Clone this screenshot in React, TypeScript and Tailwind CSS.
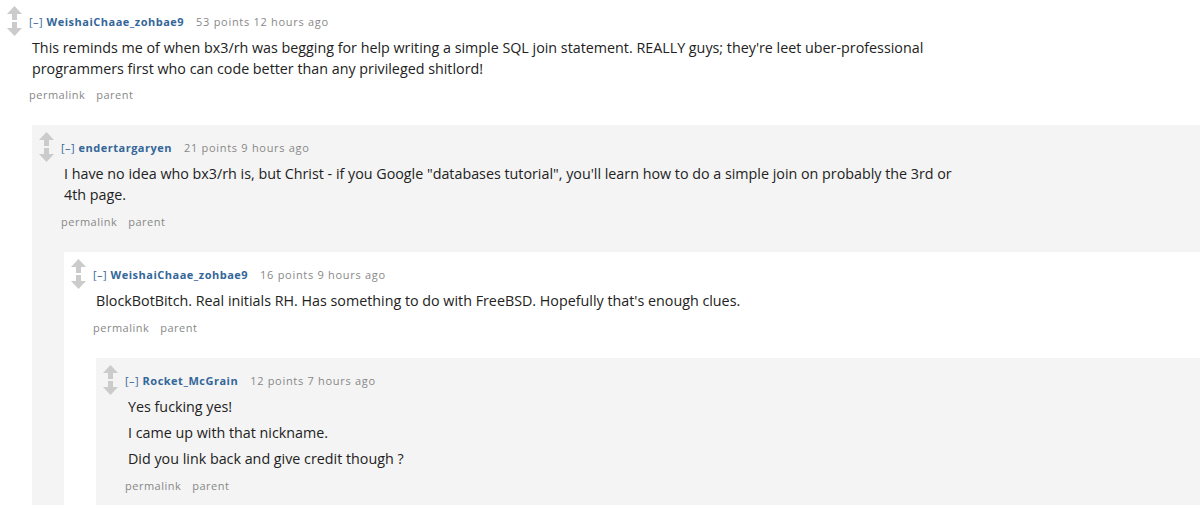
import React from 'react';

type CommentData = {
  author: string;
  points: number;
  age: string;
  body: string[];
  child?: CommentData;
};

const thread: CommentData = {
  author: 'WeishaiChaae_zohbae9',
  points: 53,
  age: '12 hours ago',
  body: [
    "This reminds me of when bx3/rh was begging for help writing a simple SQL join statement. REALLY guys; they're leet uber-professional programmers first who can code better than any privileged shitlord!",
  ],
  child: {
    author: 'endertargaryen',
    points: 21,
    age: '9 hours ago',
    body: [
      'I have no idea who bx3/rh is, but Christ - if you Google "databases tutorial", you\'ll learn how to do a simple join on probably the 3rd or 4th page.',
    ],
    child: {
      author: 'WeishaiChaae_zohbae9',
      points: 16,
      age: '9 hours ago',
      body: ["BlockBotBitch. Real initials RH. Has something to do with FreeBSD. Hopefully that's enough clues."],
      child: {
        author: 'Rocket_McGrain',
        points: 12,
        age: '7 hours ago',
        body: ['Yes fucking yes!', 'I came up with that nickname.', 'Did you link back and give credit though ?'],
      },
    },
  },
};

function Arrow({ down }: { down?: boolean }) {
  return (
    <svg width="15" height="14" viewBox="0 0 15 14" className={down ? 'rotate-180' : ''}>
      <path d="M7.5 0 L15 8 L10 8 L10 14 L5 14 L5 8 L0 8 Z" fill="#cbcbcb" />
    </svg>
  );
}

function Comment({ c, depth }: { c: CommentData; depth: number }) {
  const bg = depth % 2 === 1 ? 'bg-[#f4f4f4]' : 'bg-white';
  return (
    <div className={bg}>
      <div className="flex pb-[11px]">
        <div className="w-[29px] flex-none pl-[7px] pt-[7px] flex flex-col gap-[2px]">
          <Arrow />
          <Arrow down />
        </div>
        <div className="min-w-0 flex-1 pt-[15px]">
          <div className="text-[11px] leading-4 tracking-[0.5px]">
            <span className="text-[#369]">[–]</span>{' '}
            <span className="font-bold text-[#369]">{c.author}</span>
            <span className="ml-[12px] tracking-[0.7px] text-[#888]">
              {c.points} points {c.age}
            </span>
          </div>
          <div className="mt-[7px] pl-[3px] max-w-[908px] text-[14.3px] leading-[21px] text-[#222] flex flex-col gap-[5px]">
            {c.body.map((p, i) => (
              <p key={i}>{p}</p>
            ))}
          </div>
          <div
            className={`${depth > 0 ? 'mt-[9px]' : 'mt-[8px]'} flex gap-[11px] text-[11px] leading-4 tracking-[0.5px] text-[#888]`}
          >
            <span>permalink</span>
            <span>parent</span>
          </div>
        </div>
      </div>
      {c.child && (
        <div className="pl-[32px] pt-[11px]">
          <Comment c={c.child} depth={depth + 1} />
        </div>
      )}
    </div>
  );
}

export default function App() {
  return (
    <div className="w-[1200px] h-[506px] overflow-hidden bg-white font-['Open_Sans','Noto_Sans',sans-serif]">
      <div className="-mt-[1px]">
        <Comment c={thread} depth={0} />
      </div>
    </div>
  );
}
